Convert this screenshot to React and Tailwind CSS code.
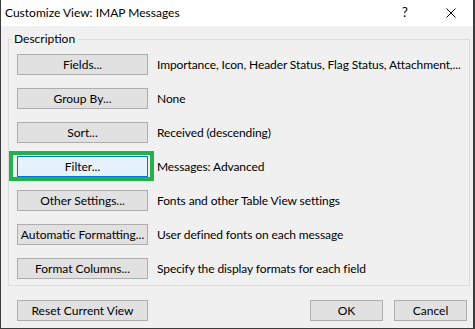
const rows = [
  { label: "Fields...", text: "Importance, Icon, Header Status, Flag Status, Attachment,..." },
  { label: "Group By...", text: "None" },
  { label: "Sort...", text: "Received (descending)" },
  { label: "Filter...", text: "Messages: Advanced", focused: true },
  { label: "Other Settings...", text: "Fonts and other Table View settings" },
  { label: "Automatic Formatting...", text: "User defined fonts on each message" },
  { label: "Format Columns...", text: "Specify the display formats for each field" },
];

function WinButton({ children, focused, className = "" }) {
  return (
    <button
      className={`h-[21px] flex items-center justify-center whitespace-nowrap border text-[12px] leading-none text-black ${
        focused ? "bg-[#e5f1fb] border-[#0078d7]" : "bg-[#e1e1e1] border-[#adadad]"
      } ${className}`}
    >
      {children}
    </button>
  );
}

export default function App() {
  return (
    <div
      className="relative w-[475px] h-[329px] bg-[#3b3b3b] overflow-hidden"
      style={{ fontFamily: 'Lato, "Liberation Sans", sans-serif' }}
    >
      <div className="ml-px w-[472px] h-[328px] bg-[#f0f0f0] flex flex-col">
        {/* title bar */}
        <div className="h-[26px] bg-white flex items-center pl-[4px] text-[12px] text-black">
          <span className="flex-1">Customize View: IMAP Messages</span>
          <span className="w-[10px] text-center mr-[36px] text-[13px]">?</span>
          <svg width="10" height="10" viewBox="0 0 10 10" className="mr-[17px]">
            <path d="M0.5 0.5 L9.5 9.5 M9.5 0.5 L0.5 9.5" stroke="#000" strokeWidth="1" />
          </svg>
        </div>

        {/* group box */}
        <fieldset className="mt-[5px] ml-[7px] w-[459px] border border-[#dcdcdc] px-[8px] pb-[6px]">
          <legend className="ml-[-6px] px-[3px] text-[12px] leading-[16px] text-black">Description</legend>
          <div className="pt-[7px] flex flex-col gap-[13px]">
            {rows.map((r) => (
              <div key={r.label} className="flex items-center">
                <WinButton focused={r.focused} className="w-[131px]">
                  {r.label}
                </WinButton>
                <span className="ml-[9px] text-[12px] text-black whitespace-nowrap tracking-[-0.1px]">{r.text}</span>
              </div>
            ))}
          </div>
        </fieldset>

        {/* footer buttons */}
        <div className="mt-[14px] flex items-center pl-[16px] pr-[6px]">
          <WinButton className="w-[131px]">Reset Current View</WinButton>
          <div className="flex-1" />
          <WinButton className="w-[73px]">OK</WinButton>
          <WinButton className="w-[73px] ml-[11px]">Cancel</WinButton>
        </div>
      </div>

      {/* highlight annotation */}
      <div className="absolute left-[9px] top-[151px] w-[145px] h-[30px] border-[4px] border-[#22b14c]" />
    </div>
  );
}
